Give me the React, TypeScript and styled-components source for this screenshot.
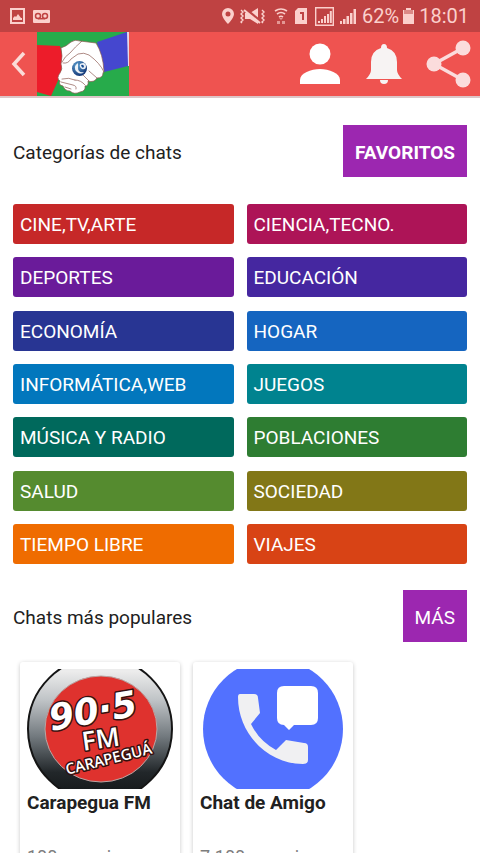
import React from "react";
import styled, { createGlobalStyle } from "styled-components";

const GlobalStyle = createGlobalStyle`
  *, *::before, *::after { box-sizing: border-box; }
  html, body, #root { height: 100%; }
  body {
    margin: 0;
    background: #fff;
    color: #212121;
    font-family: Roboto, "Liberation Sans", sans-serif;
    overflow: hidden;
  }
  button { font: inherit; border: 0; cursor: pointer; }
  svg { display: block; }
`;

const Screen = styled.div`
  height: 100vh;
  display: flex;
  flex-direction: column;
  overflow: hidden;
`;

const StatusBar = styled.div`
  flex: none;
  height: 32px;
  display: flex;
  align-items: center;
  justify-content: space-between;
  padding: 0 11px 0 10px;
  background: #bf4242;
  color: #fbd0cc;
`;

const StatusGroup = styled.div<{ $gap: number }>`
  display: flex;
  align-items: center;
  gap: ${({ $gap }) => $gap}px;
`;

const StatusText = styled.span`
  font-size: 20px;
  line-height: 24px;
`;

const AppBar = styled.header`
  flex: none;
  height: 66px;
  display: flex;
  align-items: flex-start;
  background: #ef5350;
  border-bottom: 2px solid #dcc6c8;
`;

const BackButton = styled.button`
  width: 37px;
  height: 64px;
  padding: 0 0 0 11px;
  background: none;
`;

const Actions = styled.div`
  margin-left: auto;
  display: flex;
`;

const IconButton = styled.button`
  width: 64px;
  height: 64px;
  padding: 0;
  display: grid;
  place-items: center;
  background: none;
`;

const Content = styled.main`
  flex: 1;
  min-height: 0;
  overflow: hidden;
  padding: 27px 13px 0;
`;

const SectionHead = styled.div`
  display: flex;
  align-items: center;
  justify-content: space-between;
`;

const SectionTitle = styled.h2`
  margin: 0;
  padding-top: 3px;
  font-size: 19px;
  line-height: 24px;
  font-weight: 400;
`;

const ActionButton = styled.button<{ $bold?: boolean }>`
  height: 52px;
  padding: 2px 12px 0;
  background: #9c27b0;
  color: #fff;
  && {
    font-size: 19px;
    font-weight: ${({ $bold }) => ($bold ? 700 : 400)};
  }
`;

const CategoryGrid = styled.div`
  display: grid;
  grid-template-columns: 1fr 1fr;
  grid-auto-rows: 40px;
  column-gap: 13px;
  align-content: space-between;
  min-height: 360px;
  margin: 27px 0 26px;
`;

const Category = styled.button<{ $color: string }>`
  padding: 1px 7px 0;
  border-radius: 3px;
  background: ${({ $color }) => $color};
  color: #fff;
  text-align: left;
  && { font-size: 19px; }
`;

const CardRow = styled.div`
  display: flex;
  gap: 13px;
  padding: 20px 7px 0;
`;

const Card = styled.article`
  flex: none;
  width: 160px;
  padding: 7px 7px 20px;
  border-radius: 3px;
  background: #fff;
  box-shadow: 0 1px 4px rgba(0, 0, 0, 0.22);
`;

const CardTitle = styled.h3`
  margin: 2px 0 0;
  font-size: 19px;
  line-height: 24px;
  font-weight: 700;
  white-space: nowrap;
`;

const CardMeta = styled.p`
  margin: 30px 0 0;
  font-size: 18px;
  line-height: 24px;
  color: #7d7d7d;
  white-space: nowrap;
`;

const categories: [string, string][] = [
  ["CINE,TV,ARTE", "#c62828"],
  ["CIENCIA,TECNO.", "#ad1457"],
  ["DEPORTES", "#6a1b9a"],
  ["EDUCACIÓN", "#4527a0"],
  ["ECONOMÍA", "#283593"],
  ["HOGAR", "#1565c0"],
  ["INFORMÁTICA,WEB", "#0277bd"],
  ["JUEGOS", "#00838f"],
  ["MÚSICA Y RADIO", "#00695c"],
  ["POBLACIONES", "#2e7d32"],
  ["SALUD", "#558b2f"],
  ["SOCIEDAD", "#827717"],
  ["TIEMPO LIBRE", "#ef6c00"],
  ["VIAJES", "#d84315"],
];

const NotificationIcons = () => (
  <svg width="42" height="20" viewBox="0 0 42 20" fill="none" aria-hidden="true">
    <rect x="1" y="3" width="13" height="14" stroke="#fbd0cc" strokeWidth="2" />
    <path d="M3 14v-2l2-2 1 1 2-3 3 4 1 0v2z" fill="#fbd0cc" />
    <rect x="23" y="4" width="17" height="13" rx="1" fill="#fbd0cc" />
    <circle cx="28" cy="10" r="2.5" stroke="#bf4242" strokeWidth="1.5" />
    <circle cx="35" cy="10" r="2.5" stroke="#bf4242" strokeWidth="1.5" />
    <path d="M28 12.7h7" stroke="#bf4242" strokeWidth="1.5" />
  </svg>
);

const SystemIcons = () => (
  <svg width="135" height="20" viewBox="0 0 135 20" fill="#fbd0cc" aria-hidden="true">
    <path fillRule="evenodd" d="M6 2a6 6 0 0 0-6 6c0 4 6 10 6 10s6-6 6-10a6 6 0 0 0-6-6zm0 3.5a2.5 2.5 0 1 1 0 5 2.5 2.5 0 0 1 0-5z" />
    <path d="M23 7h5l8-5v16l-8-5h-5z" />
    <path d="M22 2l16 13" stroke="#bf4242" strokeWidth="3" />
    <path d="M22 4l16 13" stroke="#fbd0cc" strokeWidth="2" />
    <path d="M19 4l2 2-2 2 2 2-2 2 2 2-2 2 1 1M40 4l2 2-2 2 2 2-2 2 2 2-2 2 1 1" fill="none" stroke="#fbd0cc" strokeWidth="1.4" />
    <g fill="none" stroke="#fbd0cc" strokeWidth="1.6">
      <path d="M53 5q6-4 12 0M55 8q4-3 8 0M57 11q2-1.5 4 0" />
    </g>
    <path d="M57 12h4l-2 2zM55 15h3v3h-3zM60 15h3v3h-3z" opacity=".6" />
    <path fillRule="evenodd" d="M76 2h9v16H73V5zM78 6v2h2v6h2V6z" />
    <path fill="none" stroke="#fbd0cc" strokeWidth="1.4" d="M93.700 1.700h17.600v17.600H93.700z" />
    <path d="M96 15h2v2h-2zM99 13h2v4h-2zM102 10h2v7h-2zM105 8h2v9h-2zM107.800 5h2v12h-2z" />
    <path d="M118 15h2v3h-2zM121 13h2.500v5H121zM124.500 10h2.500v8h-2.500zM128 7h2.500v11H128zM131.500 3h2.500v15h-2.500z" />
  </svg>
);

const BatteryIcon = () => (
  <svg width="11" height="20" viewBox="0 0 11 20" aria-hidden="true">
    <path d="M3 2h5v2h3v14H0V4h3z" fill="#fbd0cc" />
    <path d="M1 4h9v4H1z" fill="#dc8986" />
  </svg>
);

const HandshakeLogo = () => (
  <svg width="92" height="64" viewBox="0 0 92 64" role="img" aria-label="Logo">
    <defs>
      <radialGradient id="badge" cx=".35" cy=".3" r=".8">
        <stop offset="0" stopColor="#5b9fd0" />
        <stop offset="1" stopColor="#0b2a6b" />
      </radialGradient>
    </defs>
    <rect width="92" height="64" fill="#27ab4b" />
    <rect x="90" width="2" height="34" fill="#e8d8e8" />
    <path d="M60 10L90 0l1 34-24 6z" fill="#4547cf" />
    <path d="M0 13l23 1q4 10 1 28L14 64 0 60z" fill="#ed1c2a" />
    <g stroke="#8c5a52" strokeWidth=".7" strokeLinecap="round" strokeLinejoin="round">
      <path
        d="M24 16q6-2 10-6 4-3 9-1l16 2q7 11 8 28l-1 2q0 5-6 5-3 5-9 3 1 5-3 5 1 5-5 6-6 3-10-1-5 0-7-5-5-1-3-5-4-3 0-8 3-4 1-9 2-8 0-16z"
        fill="#fff"
      />
      <path
        d="M25 30q3-6 8-9 5-6 12-12M26 31q5 1 8-4l7-5q6-2 11 1 11 8 15 17M25 47q7-2 13 1M24 50l12 3q4 1 3 4M28 55l6 2M52 39l8 7M46 43l6 6M38 48q6 0 10 5"
        fill="none"
      />
    </g>
    <circle cx="42.500" cy="36.500" r="7.500" fill="url(#badge)" />
    <path d="M41 31q-6 4-1 9 4 3 7 0-6 1-6-4zM43 32q5-3 6 2 0 4-4 3-3-2-2-5z" fill="#fff" opacity=".9" />
    <path d="M44 33q3-1 3 2-2 2-3-2z" fill="#174b91" />
  </svg>
);

const RadioArt = () => (
  <svg width="146" height="120" viewBox="0 0 146 120" role="img" aria-label="90.5 FM Carapeguá">
    <defs>
      <linearGradient id="ring" x1="0" y1="0" x2="0" y2="1">
        <stop offset="0.1" stopColor="#ececec" />
        <stop offset=".3" stopColor="#bfc3c6" />
        <stop offset=".55" stopColor="#737a7f" />
        <stop offset=".8" stopColor="#22272a" />
        <stop offset="1" stopColor="#101314" />
      </linearGradient>
    </defs>
    <circle cx="73" cy="60" r="72" fill="url(#ring)" stroke="#151515" strokeWidth="2" />
    <ellipse cx="74" cy="60" rx="56" ry="53" fill="#df322e" stroke="#b7a6a4" strokeWidth="1" />
    <g fill="#fff" stroke="#35100f" strokeWidth="3" paintOrder="stroke" strokeLinejoin="round" textAnchor="middle" fontFamily="'DejaVu Sans', sans-serif">
      <text x="68" y="54" fontSize="36" fontWeight="700" fontStyle="italic" transform="rotate(-10 68 54)">90·5</text>
      <text x="75" y="79" fontSize="26" fontWeight="600" fontFamily="'Open Sans', sans-serif" transform="rotate(-8 75 79)">FM</text>
      <text x="83" y="95" fontSize="15" fontWeight="600" fontFamily="'Open Sans', sans-serif" transform="rotate(-14 83 95)">CARAPEGUÁ</text>
    </g>
  </svg>
);

const PhoneArt = () => (
  <svg width="146" height="120" viewBox="0 0 146 120" role="img" aria-label="Chat">
    <circle cx="73" cy="60" r="70" fill="#5271ff" />
    <path d="M40 25h14q4 0 4 4l2 15-9 11q8 17 25 26l10-10 18 3q4 0 4 4v13q0 4-5 4C69 95 38 66 38 28q0-3 2-3z" fill="#f0f0f2" />
    <path d="M84 17h27q7 0 7 7v25q0 7-7 7H94l-5 5-5-5q-7 0-7-7V24q0-7 7-7z" fill="#fff" />
  </svg>
);

const chats = [
  { name: "Carapegua FM", members: "100 usuarios", Art: RadioArt },
  { name: "Chat de Amigo", members: "7.100 usuarios", Art: PhoneArt },
];

export default function App() {
  return (
    <Screen>
      <GlobalStyle />
      <StatusBar>
        <NotificationIcons />
        <StatusGroup $gap={5}>
          <SystemIcons />
          <StatusGroup $gap={4}>
            <StatusText>62%</StatusText>
            <BatteryIcon />
          </StatusGroup>
          <StatusText>18:01</StatusText>
        </StatusGroup>
      </StatusBar>
      <AppBar>
        <BackButton aria-label="Volver">
          <svg width="16" height="28" viewBox="0 0 16 28" fill="none" aria-hidden="true">
            <path d="M13 3L3 14l10 11" stroke="#fbdcd8" strokeWidth="3.5" />
          </svg>
        </BackButton>
        <HandshakeLogo />
        <Actions>
          <IconButton aria-label="Perfil">
            <svg width="64" height="64" viewBox="0 0 64 64" fill="#fff" aria-hidden="true">
              <circle cx="32" cy="22" r="10.5" />
              <path d="M12 52v-4c0-7 11-11 20-11s20 4 20 11v4z" />
            </svg>
          </IconButton>
          <IconButton aria-label="Notificaciones">
            <svg width="64" height="64" viewBox="0 0 64 64" fill="#f7f3f3" aria-hidden="true">
              <path d="M32 12q3 0 3 4 10 3 10 14v8q0 4 5 9H14q5-5 5-9v-8q0-11 10-14 0-4 3-4z" />
              <path d="M28 48h8q0 4-4 4t-4-4z" />
            </svg>
          </IconButton>
          <IconButton aria-label="Compartir">
            <svg width="64" height="64" viewBox="0 0 64 64" fill="#fbdcdc" aria-hidden="true">
              <path d="M47 16L18 32l29 16" fill="none" stroke="#fbdcdc" strokeWidth="3.5" />
              <circle cx="47" cy="16" r="7.5" />
              <circle cx="18" cy="32" r="7.5" />
              <circle cx="47" cy="48" r="7.5" />
            </svg>
          </IconButton>
        </Actions>
      </AppBar>
      <Content>
        <SectionHead>
          <SectionTitle>Categorías de chats</SectionTitle>
          <ActionButton $bold>FAVORITOS</ActionButton>
        </SectionHead>
        <CategoryGrid>
          {categories.map(([label, color]) => (
            <Category key={label} $color={color}>{label}</Category>
          ))}
        </CategoryGrid>
        <SectionHead>
          <SectionTitle>Chats más populares</SectionTitle>
          <ActionButton>MÁS</ActionButton>
        </SectionHead>
        <CardRow>
          {chats.map(({ name, members, Art }) => (
            <Card key={name}>
              <Art />
              <CardTitle>{name}</CardTitle>
              <CardMeta>{members}</CardMeta>
            </Card>
          ))}
        </CardRow>
      </Content>
    </Screen>
  );
}
